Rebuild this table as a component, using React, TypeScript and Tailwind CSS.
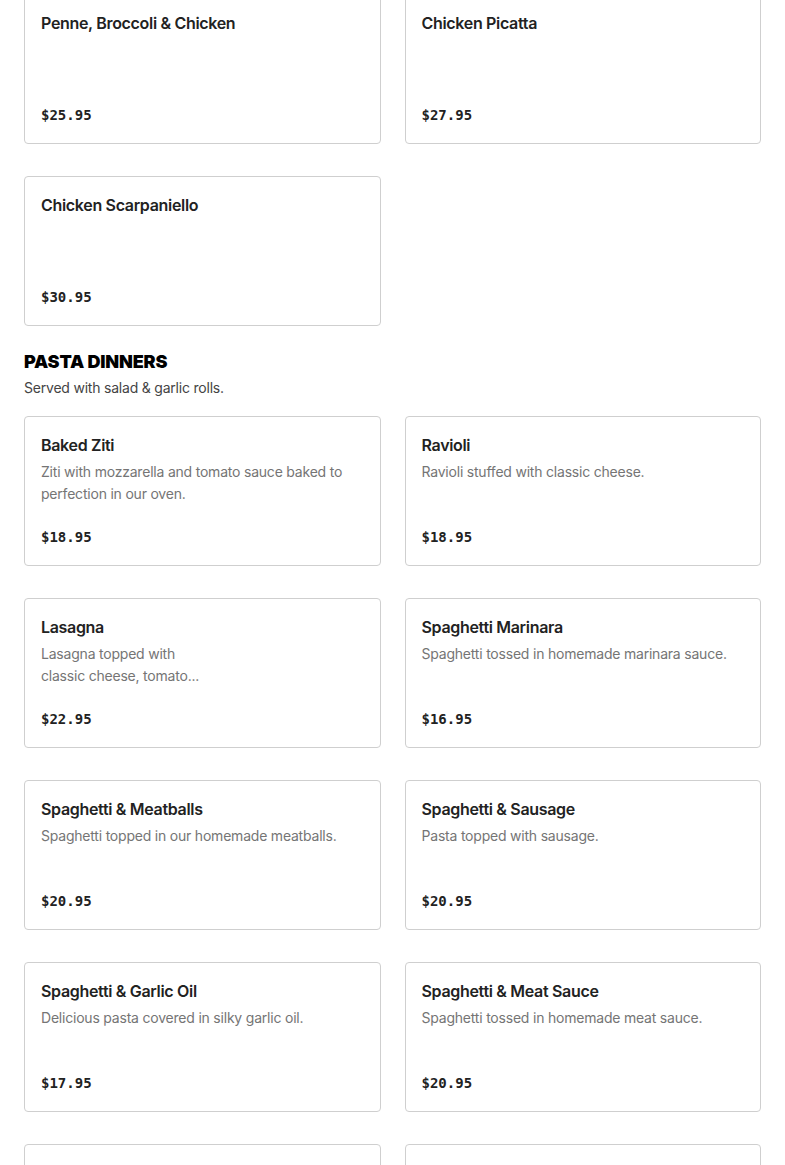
import React from 'react';

interface MenuItem {
  name: string;
  description?: React.ReactNode;
  price: string;
}

const chickenItems: MenuItem[] = [
  { name: 'Penne, Broccoli & Chicken', price: '$25.95' },
  { name: 'Chicken Picatta', price: '$27.95' },
  { name: 'Chicken Scarpaniello', price: '$30.95' },
];

const pastaItems: MenuItem[] = [
  {
    name: 'Baked Ziti',
    description: 'Ziti with mozzarella and tomato sauce baked to perfection in our oven.',
    price: '$18.95',
  },
  { name: 'Ravioli', description: 'Ravioli stuffed with classic cheese.', price: '$18.95' },
  {
    name: 'Lasagna',
    description: (
      <>
        Lasagna topped with
        <br />
        classic cheese, tomato...
      </>
    ),
    price: '$22.95',
  },
  { name: 'Spaghetti Marinara', description: 'Spaghetti tossed in homemade marinara sauce.', price: '$16.95' },
  { name: 'Spaghetti & Meatballs', description: 'Spaghetti topped in our homemade meatballs.', price: '$20.95' },
  { name: 'Spaghetti & Sausage', description: 'Pasta topped with sausage.', price: '$20.95' },
  { name: 'Spaghetti & Garlic Oil', description: 'Delicious pasta covered in silky garlic oil.', price: '$17.95' },
  { name: 'Spaghetti & Meat Sauce', description: 'Spaghetti tossed in homemade meat sauce.', price: '$20.95' },
  { name: 'Penne alla Vodka', description: 'Penne in a creamy vodka sauce.', price: '$19.95' },
  { name: 'Fettuccine Alfredo with Chicken', description: 'Fettuccine in a rich cream sauce.', price: '$24.95' },
];

// Carte d'un plat
const MenuCard: React.FC<{ item: MenuItem }> = ({ item }) => (
  <div className="flex h-[150px] flex-col rounded border border-[#cfcfcf] bg-white p-4">
    <h3 className="text-[16px] font-semibold leading-6 tracking-[-0.02em] text-[#222222]">{item.name}</h3>
    {item.description && (
      <p className="mt-1 text-[14px] leading-[22px] tracking-[-0.015em] text-[#757575]">{item.description}</p>
    )}
    <div className="mt-auto font-['DejaVu_Sans_Mono',monospace] text-[14px] font-bold leading-6 text-[#222222]">
      {item.price}
    </div>
  </div>
);

export default function App() {
  return (
    <div className="min-h-screen bg-white px-6 font-['Inter','Noto_Sans',sans-serif] text-[#222222]">
      {/* Fin de la section précédente, défilée */}
      <div className="-mt-[6px] grid grid-cols-2 gap-x-6 gap-y-8">
        {chickenItems.map((item) => (
          <MenuCard key={item.name} item={item} />
        ))}
      </div>

      {/* Pâtes */}
      <section className="mt-[24px]">
        <h2 className="text-[18px] font-black uppercase leading-6 tracking-[-0.01em] text-black">Pasta Dinners</h2>
        <p className="mt-[4px] text-[14px] leading-5 tracking-[-0.015em] text-[#444444]">Served with salad &amp; garlic rolls.</p>
        <div className="mt-[18px] grid grid-cols-2 gap-x-6 gap-y-8">
          {pastaItems.map((item) => (
            <MenuCard key={item.name} item={item} />
          ))}
        </div>
      </section>
    </div>
  );
}
